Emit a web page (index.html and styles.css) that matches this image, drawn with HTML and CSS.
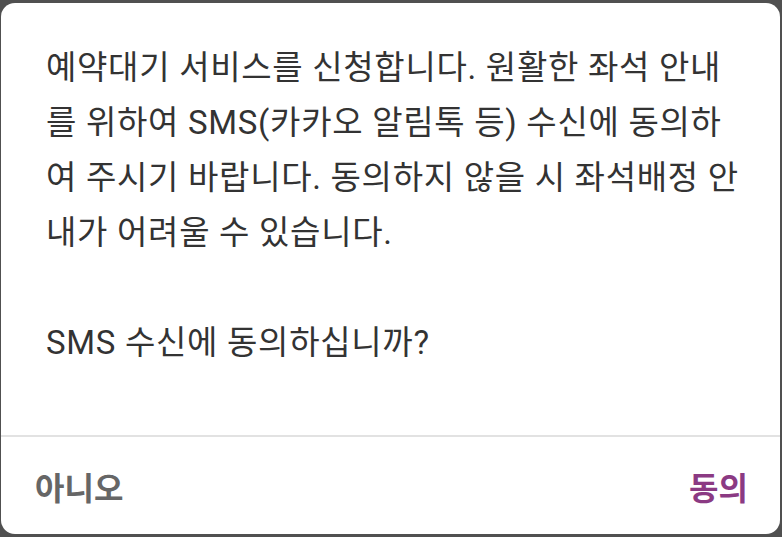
FILE: index.html
```html
<!DOCTYPE html>
<html lang="ko">
<head>
<meta charset="utf-8">
<link rel="stylesheet" href="styles.css">
</head>
<body>
<div class="dialog">
  <div class="body">
    <p class="msg">예약대기 서비스를 신청합니다. 원활한 좌석 안내를 위하여 SMS(카카오 알림톡 등) 수신에 동의하여 주시기 바랍니다. 동의하지 않을 시 좌석배정 안내가 어려울 수 있습니다.</p>
    <p class="msg question">SMS 수신에 동의하십니까?</p>
  </div>
  <div class="actions">
    <button class="btn no">아니오</button>
    <button class="btn yes">동의</button>
  </div>
</div>
</body>
</html>
```

FILE: styles.css
```css
html, body {
  margin: 0;
  padding: 0;
  background: #505050;
}
body {
  width: 782px;
  height: 537px;
  display: flex;
  padding: 3px 2px 3px 1px;
  box-sizing: border-box;
  font-family: Roboto, "Noto Sans CJK KR", sans-serif;
}
.dialog {
  flex: 1;
  background: #fff;
  border-radius: 14px;
  display: flex;
  flex-direction: column;
  overflow: hidden;
}
.body {
  flex: 1;
  padding: 37px 37px 0 45px;
  border-bottom: 2px solid #e2e2e2;
}
.msg {
  margin: 0;
  font-size: 33px;
  letter-spacing: 0.7px;
  line-height: 55px;
  color: #333;
  word-break: break-all;
}
.question {
  margin-top: 55px;
}
.actions {
  height: 97px;
  display: flex;
  justify-content: space-between;
  align-items: center;
  padding: 0 32px 0 34px;
}
.btn {
  border: 0;
  background: none;
  padding: 0;
  font-family: Roboto, "Noto Sans CJK KR", sans-serif;
  font-size: 32px;
  font-weight: 700;
}
.no { color: #666; }
.yes { color: #8b3a83; }
```
